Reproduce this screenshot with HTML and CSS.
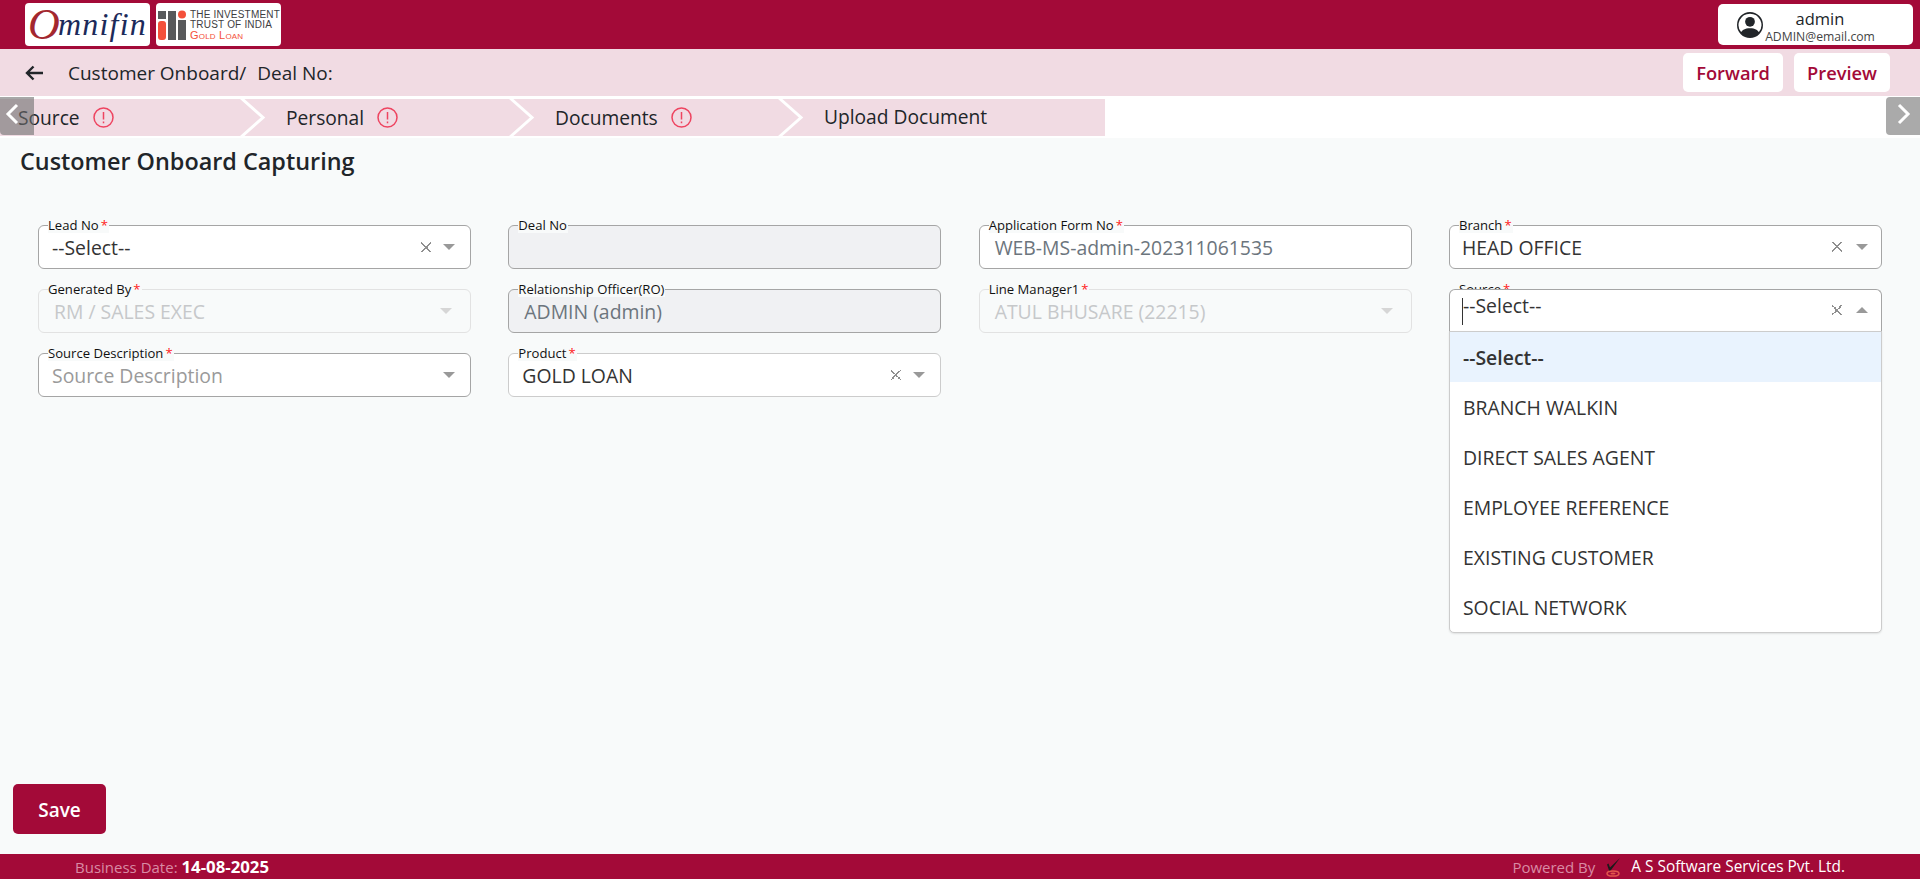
FILE: index.html
```html
<!DOCTYPE html>
<html lang="en">
<head>
  <meta charset="UTF-8">
  <title>Customer Onboard</title>
  <link rel="stylesheet" href="styles.css">
</head>
<body>

  <header class="topbar">
    <div class="logos">
      <div class="logo logo-omnifin"><span class="logo-o">O</span><span>mnifin</span></div>
      <div class="logo logo-iti">
        <svg class="iti-mark" width="30" height="30" viewBox="0 0 30 30">
          <rect x="1" y="1" width="8" height="8" fill="#58595b"/>
          <rect x="1" y="11" width="8" height="19" rx="3" fill="#f4503a"/>
          <rect x="11" y="1" width="8" height="29" fill="#58595b"/>
          <rect x="21" y="10" width="8" height="20" fill="#58595b"/>
          <circle cx="25" cy="4.5" r="4" fill="#f4503a"/>
        </svg>
        <div class="iti-text">
          <div>THE INVESTMENT</div>
          <div>TRUST OF INDIA</div>
          <div class="iti-gold">Gold Loan</div>
        </div>
      </div>
    </div>
    <div class="usercard">
      <svg class="usercard-icon" width="26" height="26" viewBox="0 0 16 16" fill="#212529">
        <path d="M11 6a3 3 0 1 1-6 0 3 3 0 0 1 6 0z"/>
        <path fill-rule="evenodd" d="M0 8a8 8 0 1 1 16 0A8 8 0 0 1 0 8zm8-7a7 7 0 0 0-5.468 11.37C3.242 11.226 4.805 10 8 10s4.757 1.225 5.468 2.37A7 7 0 0 0 8 1z"/>
      </svg>
      <div class="usercard-text">
        <div class="usercard-name">admin</div>
        <div class="usercard-mail">ADMIN@email.com</div>
      </div>
    </div>
  </header>

  <div class="subbar">
    <svg class="back" width="18" height="16" viewBox="0 0 18 16" fill="none" stroke="#212529" stroke-width="2.4">
      <path d="M18 8H2M8.5 1.5 2 8l6.5 6.5"/>
    </svg>
    <span class="crumb">Customer Onboard/</span>
    <span class="crumb crumb-deal">Deal No:</span>
    <div class="subbar-actions">
      <button class="btn-light btn-forward">Forward</button>
      <button class="btn-light btn-preview">Preview</button>
    </div>
  </div>

  <nav class="stepbar">
    <div class="steps">
      <div class="step step-first">
        <span>Source</span>
        <svg class="warn" width="21" height="21" viewBox="0 0 21 21"><circle cx="10.5" cy="10.5" r="9.5"/><path d="M10.5 5v7.5M10.5 14.6v1.6"/></svg>
      </div>
      <div class="step">
        <svg class="chevron" width="28" height="37" viewBox="0 0 28 37"><path d="M1 -1 23 18.5 1 38"/></svg>
        <span>Personal</span>
        <svg class="warn" width="21" height="21" viewBox="0 0 21 21"><circle cx="10.5" cy="10.5" r="9.5"/><path d="M10.5 5v7.5M10.5 14.6v1.6"/></svg>
      </div>
      <div class="step">
        <svg class="chevron" width="28" height="37" viewBox="0 0 28 37"><path d="M1 -1 23 18.5 1 38"/></svg>
        <span>Documents</span>
        <svg class="warn" width="21" height="21" viewBox="0 0 21 21"><circle cx="10.5" cy="10.5" r="9.5"/><path d="M10.5 5v7.5M10.5 14.6v1.6"/></svg>
      </div>
      <div class="step step-last">
        <svg class="chevron" width="28" height="37" viewBox="0 0 28 37"><path d="M1 -1 23 18.5 1 38"/></svg>
        <span>Upload Document</span>
      </div>
    </div>
    <div class="scroll-btn scroll-left">
      <svg width="14" height="22" viewBox="0 0 14 22" fill="none" stroke="#fff" stroke-width="3"><path d="M12 2 3 11l9 9"/></svg>
    </div>
    <div class="scroll-btn scroll-right">
      <svg width="14" height="22" viewBox="0 0 14 22" fill="none" stroke="#fff" stroke-width="3"><path d="M2 2l9 9-9 9"/></svg>
    </div>
  </nav>

  <main class="content">
    <h1 class="page-title">Customer Onboard Capturing</h1>

    <form class="form-grid">
      <div class="field">
        <label>Lead No<em>*</em></label>
        <div class="box"><span class="value value-dark">--Select--</span><i class="clear"></i><i class="arrow"></i></div>
      </div>
      <div class="field">
        <label>Deal No</label>
        <div class="box box-readonly"></div>
      </div>
      <div class="field">
        <label>Application Form No<em>*</em></label>
        <div class="box box-input"><span class="value value-input">WEB-MS-admin-202311061535</span></div>
      </div>
      <div class="field">
        <label>Branch<em>*</em></label>
        <div class="box box-tight"><span class="value value-dark">HEAD OFFICE</span><i class="clear"></i><i class="arrow"></i></div>
      </div>

      <div class="field">
        <label>Generated By<em>*</em></label>
        <div class="box box-disabled box-input"><span class="value value-off">RM / SALES EXEC</span><i class="arrow arrow-off"></i></div>
      </div>
      <div class="field">
        <label>Relationship Officer(RO)</label>
        <div class="box box-readonly box-input"><span class="value value-input">ADMIN (admin)</span></div>
      </div>
      <div class="field">
        <label>Line Manager1<em>*</em></label>
        <div class="box box-disabled box-input"><span class="value value-off">ATUL BHUSARE (22215)</span><i class="arrow arrow-off"></i></div>
      </div>
      <div class="field field-open">
        <label>Source<em>*</em></label>
        <div class="box box-tight box-open">
          <span class="caret"></span><span class="value value-dark">--Select--</span><i class="clear"></i><i class="arrow arrow-up"></i>
        </div>
        <ul class="menu">
          <li class="menu-active">--Select--</li>
          <li>BRANCH WALKIN</li>
          <li>DIRECT SALES AGENT</li>
          <li>EMPLOYEE REFERENCE</li>
          <li>EXISTING CUSTOMER</li>
          <li>SOCIAL NETWORK</li>
        </ul>
      </div>

      <div class="field">
        <label>Source Description<em>*</em></label>
        <div class="box"><span class="value value-hint">Source Description</span><i class="arrow"></i></div>
      </div>
      <div class="field">
        <label>Product<em>*</em></label>
        <div class="box box-soft"><span class="value value-dark">GOLD LOAN</span><i class="clear"></i><i class="arrow"></i></div>
      </div>
    </form>

    <button class="btn-save" type="button">Save</button>
  </main>

  <footer class="footer">
    <div class="footer-date">Business Date: <b>14-08-2025</b></div>
    <div class="footer-by">
      <span>Powered By</span>
      <svg class="ass-mark" width="16" height="22" viewBox="0 0 16 22">
        <path d="M2 7.5l2.5 7.5L15 1 5 10.5 3.5 6.5z" fill="#1a1a1a"/>
        <ellipse cx="8" cy="16.5" rx="6" ry="2.6" fill="none" stroke="#e2574c" stroke-width="1.5"/>
        <ellipse cx="8" cy="16.5" rx="2.6" ry="1" fill="#e2574c"/>
      </svg>
      <span class="footer-company">A S Software Services Pvt. Ltd.</span>
    </div>
  </footer>

</body>
</html>
```

FILE: styles.css
```css
* {
  box-sizing: border-box;
}

body {
  font-family: 'Open Sans', 'Noto Sans', sans-serif;
  background-color: #f8fafa;
  color: #212529;
  margin: 0;
  height: 879px;
  overflow: hidden;
  display: flex;
  flex-direction: column;
}

/* top bar */
.topbar {
  height: 49px;
  background-color: #a30a38;
  display: flex;
  align-items: center;
  justify-content: space-between;
  padding: 0 7px 0 25px;
}

.logos {
  display: flex;
  gap: 6px;
}

.logo {
  width: 125px;
  height: 43px;
  background: #fff;
  border-radius: 4px;
  display: flex;
  align-items: center;
}

.logo-omnifin {
  justify-content: center;
  font-family: 'Liberation Serif', serif;
  font-style: italic;
  font-size: 32px;
  letter-spacing: 1.2px;
  color: #1c2a5a;
}

.logo-o {
  font-size: 44px;
  color: #a3272f;
  line-height: 1;
  margin-right: -3px;
}

.logo-iti {
  padding-left: 1px;
  gap: 3px;
}

.iti-text {
  font-family: 'Liberation Sans', sans-serif;
  font-size: 10px;
  line-height: 10px;
  letter-spacing: 0.2px;
  color: #3d3d3f;
  white-space: nowrap;
}

.iti-gold {
  font-variant: small-caps;
  color: #f4503a;
  font-size: 11px;
}

.usercard {
  width: 195px;
  height: 41px;
  background: #fff;
  border-radius: 5px;
  display: flex;
  padding-left: 19px;
}

.usercard-icon {
  margin-top: 8px;
}

.usercard-text {
  flex: 1;
  text-align: center;
  padding-right: 36px;
}

.usercard-name {
  font-size: 16.5px;
  font-weight: 500;
  line-height: 22px;
  margin-top: 4px;
}

.usercard-mail {
  font-size: 12.2px;
  line-height: 14px;
  color: #444;
  white-space: nowrap;
}

/* breadcrumb bar */
.subbar {
  height: 47px;
  background-color: #f1dbe3;
  display: flex;
  align-items: center;
  padding: 0 30px 0 25px;
}

.back {
  margin-right: 25px;
}

.crumb {
  font-size: 19px;
}

.crumb-deal {
  margin-left: 11px;
}

.subbar-actions {
  margin-left: auto;
  display: flex;
  gap: 11px;
}

.btn-light {
  height: 39px;
  border: none;
  border-radius: 5px;
  background: #fff;
  color: #a30a38;
  font-family: inherit;
  font-size: 18.3px;
  font-weight: 600;
  padding: 0;
}

.btn-forward {
  width: 100px;
}

.btn-preview {
  width: 96px;
}

/* steps */
.stepbar {
  height: 42px;
  background: #fff;
  padding-top: 3px;
  position: relative;
}

.steps {
  width: 1105px;
  height: 37px;
  background-color: #f1dbe3;
  display: flex;
  overflow: hidden;
}

.step {
  width: 269px;
  padding-left: 46px;
  position: relative;
  display: flex;
  align-items: center;
  gap: 13px;
  font-size: 19.2px;
  font-weight: 500;
}

.step-first {
  width: 240px;
  padding-left: 18px;
}

.step-last {
  flex: 1;
  padding-bottom: 3px;
}

.chevron {
  position: absolute;
  left: 0;
  top: 0;
  fill: none;
  stroke: #fff;
  stroke-width: 3;
}

.warn {
  fill: none;
  stroke: #ee4460;
  stroke-width: 1.5;
}

.scroll-btn {
  position: absolute;
  top: 1px;
  width: 34px;
  height: 38px;
  display: flex;
  align-items: flex-start;
  padding-top: 6px;
  justify-content: center;
}

.scroll-left {
  left: 0;
  background: rgba(110, 110, 110, 0.6);
  border-radius: 0 0 0 4px;
  padding-right: 10px;
}

.scroll-right {
  right: 0;
  background: #aaa;
  border-radius: 4px 0 0 4px;
  padding-left: 2px;
}

/* form */
.content {
  flex: 1;
  display: flex;
  flex-direction: column;
  min-height: 0;
}

.page-title {
  font-size: 23.4px;
  font-weight: 600;
  line-height: 30px;
  margin: 8px 0 0 20px;
}

.form-grid {
  display: grid;
  grid-template-columns: repeat(4, 433px);
  column-gap: 37.33px;
  row-gap: 20px;
  padding: 49px 0 0 38px;
}

.field {
  position: relative;
  height: 44px;
}

.field label {
  position: absolute;
  left: 10px;
  top: -7px;
  z-index: 1;
  background: #f8fafa;
  font-size: 13.1px;
  line-height: 15px;
  color: #111;
  padding-right: 1px;
}

.field label em {
  color: #ff2020;
  font-style: normal;
  margin-left: 2px;
}

.box {
  height: 44px;
  background: #fff;
  border: 1px solid #a5a5a5;
  border-radius: 6px;
  display: flex;
  align-items: center;
  padding: 0 13px 0 13px;
}

.box-tight {
  padding: 0 11px 0 12px;
}

.box-tight .clear {
  margin-right: 14px;
}

.box-soft {
  border-color: #ccc;
}

.box-input {
  padding-left: 15px;
}

.box-readonly {
  background: #f0f1f3;
}

.box-disabled {
  background: transparent;
  border-color: #e2e2e2;
}

.value {
  font-size: 19.4px;
  line-height: 22px;
  padding-top: 2px;
  flex: 1;
  white-space: nowrap;
}

.value-dark {
  color: #333;
}

.value-input {
  color: #6c757d;
}

.value-off {
  color: #c6c8ca;
}

.value-hint {
  color: #9a9a9a;
}

.clear {
  width: 10px;
  height: 10px;
  margin-right: 12px;
  background:
    linear-gradient(45deg, transparent 45%, #8f8f8f 45%, #8f8f8f 55%, transparent 55%),
    linear-gradient(-45deg, transparent 45%, #8f8f8f 45%, #8f8f8f 55%, transparent 55%);
}

.arrow {
  width: 0;
  height: 0;
  margin-right: 2px;
  border-left: 6px solid transparent;
  border-right: 6px solid transparent;
  border-top: 6px solid #999;
}

.arrow-off {
  margin-right: 5px;
  border-top-color: #d6d6d6;
}

.arrow-up {
  border-top: none;
  border-bottom: 6px solid #999;
}

/* open dropdown */
.field-open label {
  z-index: 0;
}

.box-open {
  position: relative;
  z-index: 2;
  height: 43px;
  border-bottom: none;
  border-radius: 6px 6px 0 0;
  align-items: flex-start;
  padding-top: 3px;
}

.box-open .clear {
  margin-top: 12px;
}

.box-open .arrow {
  margin-top: 14px;
}

.caret {
  width: 1px;
  height: 27px;
  margin-top: 5px;
  background: #333;
}

.menu {
  position: absolute;
  left: 0;
  right: 0;
  top: 42px;
  z-index: 3;
  margin: 0;
  padding: 0;
  list-style: none;
  background: #fff;
  border: 1px solid #ccc;
  border-radius: 0 0 5px 5px;
  box-shadow: 0 1px 2px rgba(0, 0, 0, 0.1);
}

.menu li {
  height: 50px;
  line-height: 52px;
  padding-left: 13px;
  font-size: 19.4px;
  color: #333;
}

.menu .menu-active {
  background: #e9f3fe;
  font-weight: 600;
}

.btn-save {
  width: 93px;
  height: 50px;
  margin: auto 0 20px 13px;
  padding: 2px 0 0;
  border: none;
  border-radius: 5px;
  background-color: #a30a38;
  color: #fff;
  font-family: inherit;
  font-size: 19px;
  font-weight: 600;
}

/* footer */
.footer {
  height: 25px;
  background-color: #a30a38;
  color: #d98aa4;
  font-size: 15px;
  display: flex;
  align-items: center;
  justify-content: space-between;
  padding: 0 75px;
}

.footer-date b {
  color: #fff;
  font-size: 16.8px;
}

.footer-by {
  display: flex;
  align-items: center;
  gap: 10px;
}

.ass-mark {
  margin-top: 2px;
}

.footer-company {
  color: #fff;
  font-size: 15.4px;
}
```
